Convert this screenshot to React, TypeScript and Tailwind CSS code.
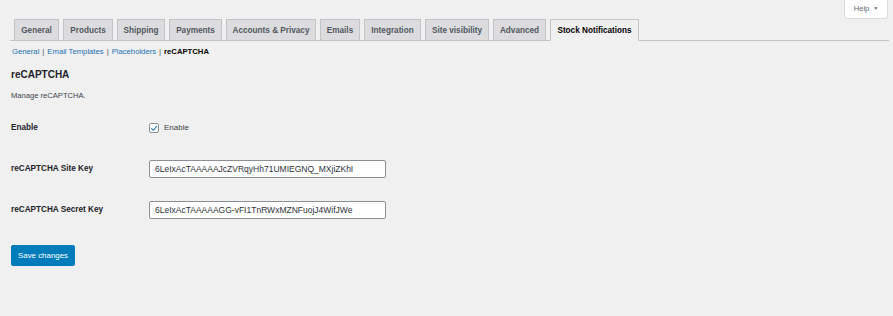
import React from "react";

const tabs: { label: string; w: string; active?: boolean }[] = [
  { label: "General", w: "w-[45px]" },
  { label: "Products", w: "w-[50px]" },
  { label: "Shipping", w: "w-[48px]" },
  { label: "Payments", w: "w-[53px]" },
  { label: "Accounts & Privacy", w: "w-[90px]" },
  { label: "Emails", w: "w-[40px]" },
  { label: "Integration", w: "w-[57px]" },
  { label: "Site visibility", w: "w-[64px]" },
  { label: "Advanced", w: "w-[53px]" },
  { label: "Stock Notifications", w: "w-[89px]", active: true },
];

function Row({ label, children }: { label: string; children: React.ReactNode }) {
  return (
    <div className="flex items-center h-[28px]">
      <div className="w-[149px] shrink-0 pl-[11px] text-[8.2px] font-bold text-[#1d2327]">{label}</div>
      {children}
    </div>
  );
}

function TextInput({ value }: { value: string }) {
  return (
    <input
      readOnly
      value={value}
      className="w-[237px] h-[18px] bg-white border border-[#8c8f94] rounded-[2px] pl-[5px] text-[8.5px] text-[#2c3338] outline-none font-['Liberation_Sans',Arial,sans-serif]"
    />
  );
}

function Sep() {
  return <span className="mx-[3px] text-[#50575e]">|</span>;
}

export default function App() {
  return (
    <div className="w-[893px] h-[316px] bg-[#f0f0f1] overflow-hidden font-['Liberation_Sans',Arial,sans-serif] text-[#3c434a]">
      <div className="flex justify-end pr-[5px]">
        <div className="h-[19px] w-[44px] bg-white border border-t-0 border-[#dcdcde] rounded-b-[3px] flex items-center justify-center gap-[4px] text-[7.6px] text-[#646970]">
          <span>Help</span>
          <span className="text-[5px]">▼</span>
        </div>
      </div>
      <nav className="ml-[10px] mr-[4px] h-[22px] border-b border-[#c3c4c7] flex items-start gap-[4px] pl-[4px]">
        {tabs.map((t) => (
          <div
            key={t.label}
            className={
              t.active
                ? `${t.w} h-[22px] shrink-0 flex items-center justify-center border border-[#c3c4c7] border-b-[#f0f0f1] bg-[#f0f0f1] text-[8.2px] font-bold text-[#000] pt-[2px]`
                : `${t.w} h-[22px] shrink-0 flex items-center justify-center border border-[#c3c4c7] bg-[#dcdcde] text-[8.2px] font-bold text-[#50575e] pt-[2px]`
            }
          >
            {t.label}
          </div>
        ))}
      </nav>
      <div className="pl-[12px] mt-[5px] h-[12px] leading-[12px] text-[7.7px] whitespace-pre flex">
        <span className="text-[#2271b1]">General</span>
        <Sep />
        <span className="text-[#2271b1]">Email Templates</span>
        <Sep />
        <span className="text-[#2271b1]">Placeholders</span>
        <Sep />
        <span className="font-bold text-[#000]">reCAPTCHA</span>
      </div>
      <h2 className="pl-[11px] mt-[11px] h-[12px] leading-[12px] text-[10px] font-bold text-[#1d2327]">reCAPTCHA</h2>
      <p className="pl-[11px] mt-[9px] h-[12px] leading-[12px] text-[7.6px] text-[#3c434a]">Manage reCAPTCHA.</p>
      <div className="mt-[12px] flex flex-col gap-[13px]">
        <Row label="Enable">
          <label className="flex items-center gap-[5px] text-[8px] text-[#3c434a]">
            <span className="w-[10px] h-[10px] bg-white border border-[#8c8f94] rounded-[2px] flex items-center justify-center">
              <svg viewBox="0 0 10 10" className="w-[9px] h-[9px]">
                <path d="M2 5.2 L4.1 7.3 L8.2 2.3" fill="none" stroke="#3582c4" strokeWidth="1.4" strokeLinecap="round" strokeLinejoin="round" />
              </svg>
            </span>
            <span>Enable</span>
          </label>
        </Row>
        <Row label="reCAPTCHA Site Key">
          <TextInput value="6LeIxAcTAAAAAJcZVRqyHh71UMIEGNQ_MXjiZKhI" />
        </Row>
        <Row label="reCAPTCHA Secret Key">
          <TextInput value="6LeIxAcTAAAAAGG-vFI1TnRWxMZNFuojJ4WifJWe" />
        </Row>
      </div>
      <div className="pl-[11px] mt-[21px]">
        <button className="w-[64px] h-[21px] bg-[#007cba] border border-[#007cba] rounded-[2px] text-white text-[7.9px] flex items-center justify-center">
          Save changes
        </button>
      </div>
    </div>
  );
}
